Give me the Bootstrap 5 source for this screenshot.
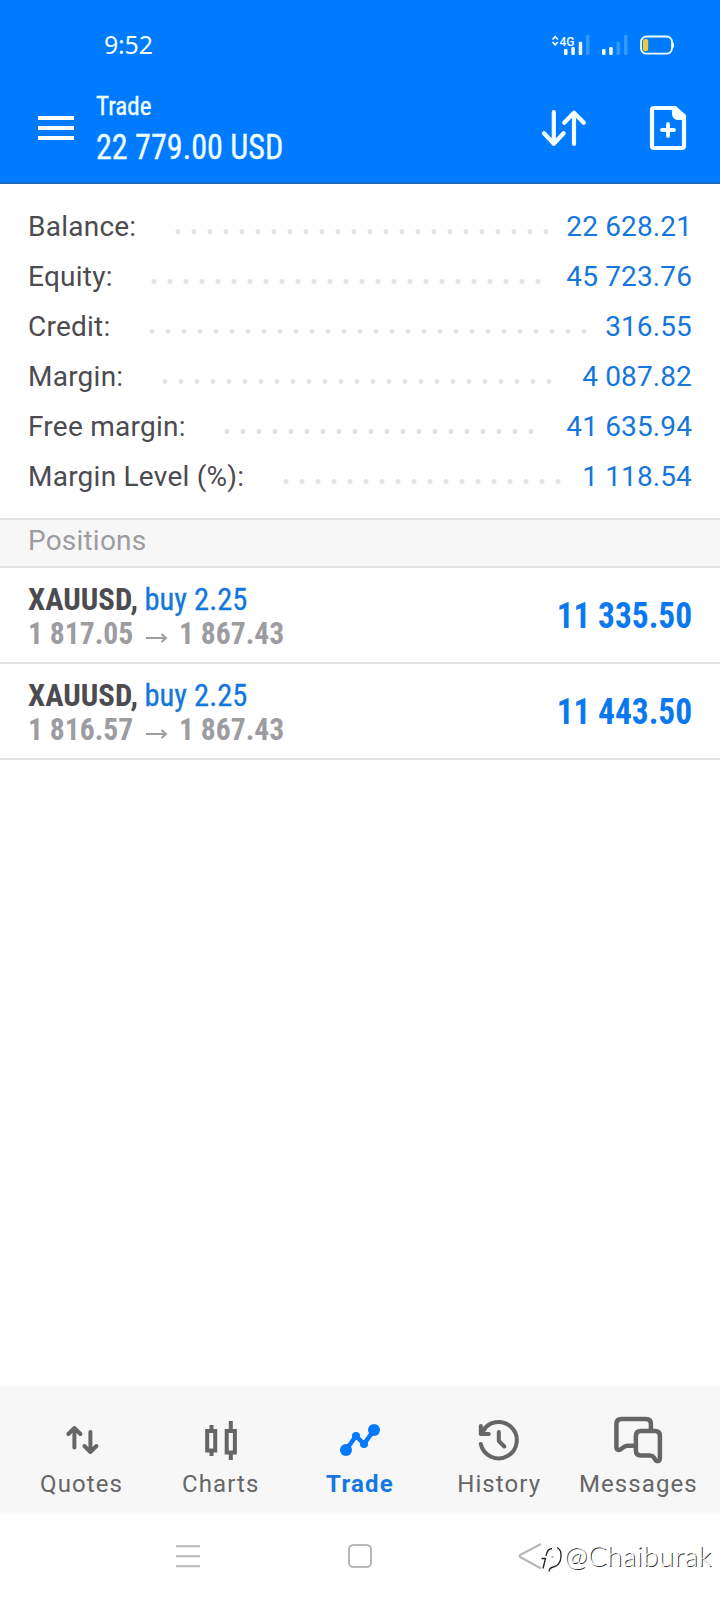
<!DOCTYPE html>
<html lang="en">
<head>
<meta charset="utf-8">
<meta name="viewport" content="width=device-width, initial-scale=1">
<title>Trade</title>
<link href="https://cdn.jsdelivr.net/npm/bootstrap@5.3.0/dist/css/bootstrap.min.css" rel="stylesheet">
<style>
body{font-family:Roboto,"Liberation Sans",sans-serif;background:#fff;color:#4b4b50}
.screen{width:720px;height:1600px}
.cond{font-family:"Roboto Condensed",Roboto,sans-serif}
.top-area{height:184px;background:#007aff;border-bottom:2px solid #1a69c4;color:#f0feff}
.status-row{height:88px;padding:29px 46px 0 104px}
.clock{font:25px/30px "Noto Sans",sans-serif;letter-spacing:-.2px}
.title-row{padding:3px 33px 0 38px}
.burger{margin-top:25px}
.title-text{margin-left:22px;-webkit-text-stroke:.35px #f0feff}
.actions{margin:12px -2px 0 0}
.title-small{font-size:26px;line-height:30px}
.title-big{font-size:35px;line-height:53px}
.summary{padding:18px 28px 16px}
.sum-row{height:50px;font-size:28px;line-height:50px;letter-spacing:.24px}
.leader{width:calc(var(--n)*16px);height:5px;margin:9px auto 0 33.5px;background:radial-gradient(circle at 8px 2.5px,#e3e3e4 2.2px,transparent 2.8px) 0 0/16px 5px repeat-x}
.value{color:#1577dc}
.sum-row .value{letter-spacing:.13px}
.section-head{height:50px;background:#f7f7f7;border:solid #e3e3e4;border-width:2px 0;padding-left:28px;font-size:28px;line-height:41px;letter-spacing:.2px;color:#9c9ca1}
.pos{height:96px;border-bottom:2px solid #e3e3e4;padding:3px 28px 0}
.pos-line{font-size:31.5px;line-height:34px}
.muted{color:#9c9ca1}
.pos .value{-webkit-text-stroke:.3px #1577dc}
.profit{font-size:35.5px;color:#0a79f0}
.arr{margin:6px 4.5px 0 -1.5px}
.tabs{height:125px;background:#f7f7f7;padding:24px 12px 0;box-shadow:0 0 4px rgba(0,0,0,.07);color:#666}
.tab-label{font-size:24px;line-height:30px;letter-spacing:1.1px}
.tab-label.on{color:#1478e4;letter-spacing:1.2px}
.sys{height:88px;position:relative}
.sys svg{display:block}
.sig{position:absolute;left:564px;top:23px;font:300 28px/40px Lato,sans-serif;letter-spacing:.3px;color:#fff;text-shadow:1px 1px 0 #333}
.fx{display:inline-block;transform-origin:0 50%;white-space:nowrap}
.fxr{transform-origin:100% 50%}
.t1{transform:scaleX(.965)}
.t2{transform:scale(.918,1.02)}
.p1{transform:scaleX(.975)}
.p2{transform:translateX(-3.5px) scaleX(.97)}
.p3,.p4{transform:scaleX(.94)}
.profit{transform:scale(.94,1.02)}
</style>
</head>
<body>
<div class="screen d-flex flex-column overflow-hidden">
  <header class="top-area flex-shrink-0">
    <div class="status-row d-flex justify-content-between align-items-start">
      <span class="clock">9:52</span>
      <svg width="124" height="28" viewBox="550 29 124 28" fill="#f0feff">
        <path d="M552.5 39.5l2.700-2.700 2.700 2.700M552.500 42l2.700 2.700 2.700-2.700" fill="none" stroke="#f0feff" stroke-width="1.700"/>
        <text x="559.500" y="46" font-family="Roboto" font-size="13.500" font-weight="500" textLength="15" lengthAdjust="spacingAndGlyphs">4G</text>
        <rect x="564" y="49" width="3.500" height="6" rx="1"/><rect x="571.300" y="47" width="3.500" height="8" rx="1"/><rect x="578.700" y="41.700" width="3.500" height="13.300" rx="1"/>
        <rect x="586" y="35" width="3.500" height="20" rx="1" fill="#3399ff"/>
        <rect x="602" y="49" width="3.500" height="6" rx="1"/><rect x="609.200" y="47" width="3.500" height="8" rx="1"/>
        <rect x="616.600" y="41.700" width="3.500" height="13.300" rx="1" fill="#3399ff"/><rect x="624" y="35" width="3.500" height="20" rx="1" fill="#3399ff"/>
        <rect x="641" y="36.500" width="31" height="17.200" rx="5.500" fill="none" stroke="#f0feff" stroke-width="1.800"/>
        <path d="M672 41.500q2.200 1 2.200 3.700t-2.200 3.700z"/>
        <rect x="643" y="39" width="5.200" height="12.300" rx="2.200" fill="#efc93b"/>
      </svg>
    </div>
    <div class="title-row d-flex">
      <svg width="36" height="24" viewBox="0 0 36 24" class="burger flex-shrink-0"><path d="M0 2h36M0 12h36M0 22h36" stroke="#fff" stroke-width="4"/></svg>
      <div class="cond title-text flex-fill">
        <div class="title-small"><span class="fx t1">Trade</span></div>
        <div class="title-big"><span class="fx t2">22 779.00 USD</span></div>
      </div>
      <svg width="150" height="50" viewBox="539 103 150 50" class="actions flex-shrink-0" fill="none" stroke="#f4ffff" stroke-width="4.200" stroke-linecap="round" stroke-linejoin="round">
        <path d="M553.800 112v32M544 133.300l9.800 10.400 9.800-10.400M574 144v-31M564.200 122.800l9.800-10 9.800 10"/>
        <path d="M654 108h21l9 8.500V146q0 2-2 2h-28q-2 0-2-2v-36q0-2 2-2z"/>
        <path d="M674 108v5q0 5 5 5h5v-2z" fill="#f4ffff"/>
        <path d="M668 124v12M662 130h12" stroke-width="3.800"/>
      </svg>
    </div>
  </header>

  <section class="summary flex-shrink-0">
    <div class="sum-row d-flex align-items-center"><span>Balance:</span><span class="leader" style="--n:24"></span><span class="value">22 628.21</span></div>
    <div class="sum-row d-flex align-items-center"><span>Equity:</span><span class="leader" style="--n:25"></span><span class="value">45 723.76</span></div>
    <div class="sum-row d-flex align-items-center"><span>Credit:</span><span class="leader" style="--n:28"></span><span class="value">316.55</span></div>
    <div class="sum-row d-flex align-items-center"><span>Margin:</span><span class="leader" style="--n:25"></span><span class="value">4 087.82</span></div>
    <div class="sum-row d-flex align-items-center"><span>Free margin:</span><span class="leader" style="--n:20"></span><span class="value">41 635.94</span></div>
    <div class="sum-row d-flex align-items-center"><span>Margin Level (%):</span><span class="leader" style="--n:18"></span><span class="value">1 118.54</span></div>
  </section>

  <div class="section-head flex-shrink-0">Positions</div>
  <div class="pos cond d-flex align-items-center justify-content-between flex-shrink-0">
    <div>
      <div class="pos-line"><b class="fx p1">XAUUSD,</b> <span class="fx p2 value">buy 2.25</span></div>
      <div class="pos-line muted"><b class="fx p3">1 817.05</b> <svg width="22" height="12" viewBox="0 0 22 12" class="arr"><path d="M0 6h20M15.500 2L20 6l-4.500 4" fill="none" stroke="currentColor" stroke-width="2"/></svg> <b class="fx p4">1 867.43</b></div>
    </div>
    <b class="fx fxr profit">11 335.50</b>
  </div>
  <div class="pos cond d-flex align-items-center justify-content-between flex-shrink-0">
    <div>
      <div class="pos-line"><b class="fx p1">XAUUSD,</b> <span class="fx p2 value">buy 2.25</span></div>
      <div class="pos-line muted"><b class="fx p3">1 816.57</b> <svg width="22" height="12" viewBox="0 0 22 12" class="arr"><path d="M0 6h20M15.500 2L20 6l-4.500 4" fill="none" stroke="currentColor" stroke-width="2"/></svg> <b class="fx p4">1 867.43</b></div>
    </div>
    <b class="fx fxr profit">11 443.50</b>
  </div>

  <nav class="tabs mt-auto flex-shrink-0">
    <div class="row g-0 text-center flex-nowrap">
      <div class="col d-flex flex-column align-items-center">
        <svg width="60" height="58" viewBox="51.600 1411 60 58" fill="none" stroke="#666" stroke-width="4" stroke-linecap="round" stroke-linejoin="round"><path d="M74 1447.500V1428M68 1434l6-6 6 6M90 1432v20M84 1446l6 6 6-6"/></svg>
        <span class="tab-label">Quotes</span>
      </div>
      <div class="col d-flex flex-column align-items-center">
        <svg width="60" height="58" viewBox="190.800 1411 60 58" fill="none" stroke="#666" stroke-width="4"><path d="M207 1431h8v19.500h-8zM226.500 1431h8.200v21.500h-8.200zM211.300 1425v5M211.300 1451v5M230.600 1421v9M230.600 1453v7"/></svg>
        <span class="tab-label">Charts</span>
      </div>
      <div class="col d-flex flex-column align-items-center">
        <svg width="60" height="58" viewBox="330 1411 60 58" fill="#007aff"><path d="M346 1450l10-14 8 8 10-14" fill="none" stroke="#007aff" stroke-width="4.500"/><circle cx="346" cy="1450" r="6"/><circle cx="356" cy="1436" r="4"/><circle cx="364" cy="1444" r="4"/><circle cx="374" cy="1430" r="6"/></svg>
        <b class="tab-label on">Trade</b>
      </div>
      <div class="col d-flex flex-column align-items-center">
        <svg width="60" height="58" viewBox="469.200 1411 60 58" fill="none" stroke="#666" stroke-width="4" stroke-linecap="round" stroke-linejoin="round"><path d="M481 1444A18.200 18.200 0 1 0 482.500 1432M481 1426v8h8M481 1434l4-5M499 1432v9l5.500 5.500"/></svg>
        <span class="tab-label">History</span>
      </div>
      <div class="col d-flex flex-column align-items-center">
        <svg width="60" height="58" viewBox="607.600 1411 60 58" fill="none" stroke="#666" stroke-width="4.500" stroke-linejoin="round"><path d="M650.500 1430v-6q0-5-5-5H621q-5 0-5 5v23q0 4 4 2.500l3.500-2.500q1.500-1.200 4-1.200h7M640.500 1431h14q5 0 5 5v22q0 4.500-4 2.500l-2-3q-1.500-2-4-2h-9q-5 0-5-5V1436q0-5 5-5z"/></svg>
        <span class="tab-label">Messages</span>
      </div>
    </div>
  </nav>
  <div class="sys flex-shrink-0">
    <svg width="720" height="88" viewBox="0 1512 720 88" fill="none" stroke="#b7b7b7" stroke-width="2" stroke-linejoin="round"><path d="M176 1546.300h24M176 1556.300h24M176 1566.300h24M541 1544l-20 10.500q-3 1.500 0 3L541 1568.500"/><rect x="349" y="1545" width="22" height="22" rx="4.500"/>
      <path d="M541.500 1558.500h4l-2.500 10M546 1556q1-7 6-7.500M557 1547.500q4.500 2 4 9-.5 9-7.500 10.500-4 .5-4.500 4.500" stroke="#222" stroke-width="1.300"/><path d="M551.500 1557h2" stroke="#666" stroke-width="1"/></svg>
    <span class="sig">@Chaiburak</span>
  </div>
</div>
<script src="https://cdn.jsdelivr.net/npm/bootstrap@5.3.0/dist/js/bootstrap.bundle.min.js"></script>
</body>
</html>
